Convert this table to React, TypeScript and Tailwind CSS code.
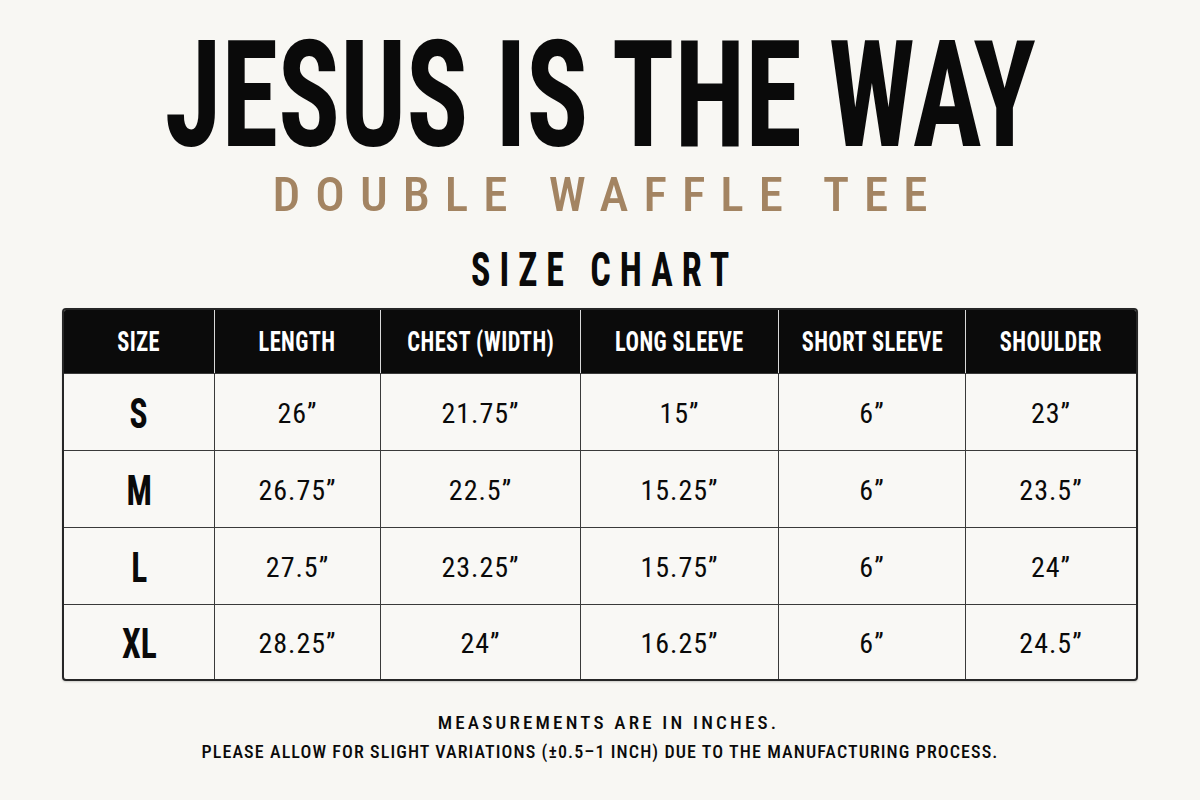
import React from "react";

const COLS = ["SIZE", "LENGTH", "CHEST (WIDTH)", "LONG SLEEVE", "SHORT SLEEVE", "SHOULDER"];

const ROWS = [
  { size: "S", values: ["26”", "21.75”", "15”", "6”", "23”"], h: "h-[77px]" },
  { size: "M", values: ["26.75”", "22.5”", "15.25”", "6”", "23.5”"], h: "h-[77px]" },
  { size: "L", values: ["27.5”", "23.25”", "15.75”", "6”", "24”"], h: "h-[77px]" },
  { size: "XL", values: ["28.25”", "24”", "16.25”", "6”", "24.5”"], h: "h-[75px]" },
];

const GRID = "grid grid-cols-[150px_166px_200px_198px_187px_171px]";

export default function App() {
  return (
    <div className="w-[1200px] h-[800px] bg-[#f8f7f3] flex flex-col items-center font-['Roboto_Condensed','Liberation_Sans_Narrow',sans-serif] text-[#0a0a0a] overflow-hidden">
      <h1 className="mt-[22px] text-[148px] leading-none font-bold whitespace-nowrap">
        <span className="inline-block scale-x-[0.78]">JESUS IS THE WAY</span>
      </h1>

      <p className="text-[49px] leading-none font-medium text-[#a38462] whitespace-nowrap">
        <span className="inline-block tracking-[15px] pl-[15px]">DOUBLE WAFFLE TEE</span>
      </p>

      <h2 className="mt-[27px] text-[48px] leading-none font-bold whitespace-nowrap">
        <span className="inline-block scale-x-[0.75] tracking-[12px] pl-[12px]">SIZE CHART</span>
      </h2>

      {/* tabla de medidas */}
      <div className="mt-[14px] w-[1076px] border-2 border-[#262626] rounded-[4px] overflow-hidden bg-[#f9f8f5] shadow-[0_1px_2px_rgba(0,0,0,0.18)]">
        <div className={`${GRID} h-[63px] bg-[#0b0b0b] text-white`}>
          {COLS.map((c, i) => (
            <div
              key={c}
              className={`flex items-center justify-center ${i > 0 ? "border-l border-[#d9d9d9]" : ""}`}
            >
              <span className="inline-block text-[28px] leading-none font-bold tracking-[0.5px] scale-x-[0.8] whitespace-nowrap">
                {c}
              </span>
            </div>
          ))}
        </div>

        {ROWS.map(r => (
          <div key={r.size} className={`${GRID} ${r.h} border-t border-[#3a3a3a]`}>
            <div className="flex items-center justify-center pt-[2px]">
              <span className="inline-block text-[43px] leading-none font-bold scale-x-[0.78]">{r.size}</span>
            </div>
            {r.values.map((v, i) => (
              <div key={i} className="flex items-center justify-center border-l border-[#3a3a3a] pt-[3px]">
                <span className="text-[28px] leading-none font-normal tracking-[1px]">{v}</span>
              </div>
            ))}
          </div>
        ))}
      </div>

      <p className="mt-[32px] text-[19px] leading-none font-medium tracking-[3.2px] pl-[17px] whitespace-nowrap">
        MEASUREMENTS ARE IN INCHES.
      </p>
      <p className="mt-[11px] text-[18px] leading-none font-medium tracking-[1.1px] whitespace-nowrap">
        PLEASE ALLOW FOR SLIGHT VARIATIONS (±0.5–1 INCH) DUE TO THE MANUFACTURING PROCESS.
      </p>
    </div>
  );
}
